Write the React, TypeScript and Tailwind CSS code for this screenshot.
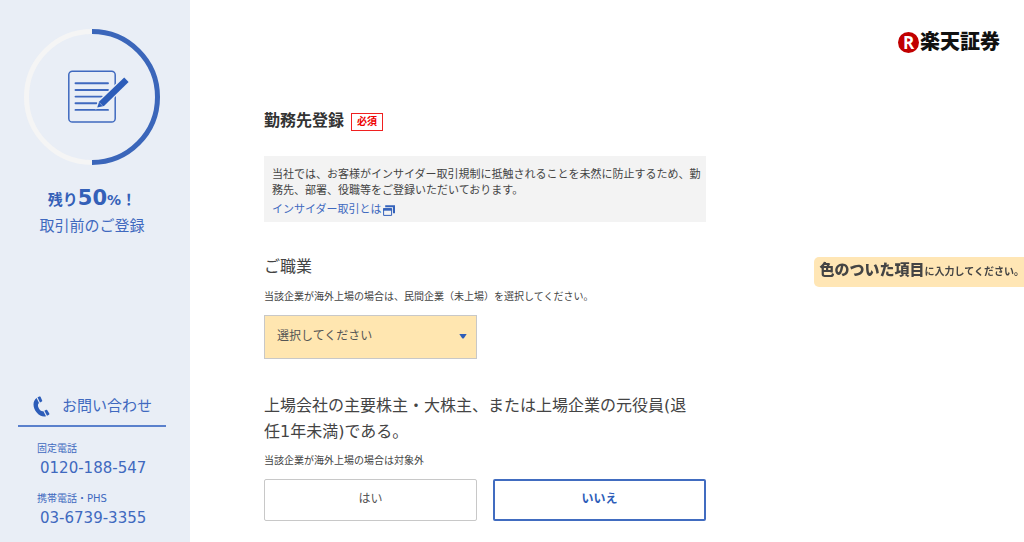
import { useState } from "react";

function ProgressRing() {
  return (
    <svg viewBox="0 0 136 136" className="h-[136px] w-[136px]" role="img" aria-label="50%" fill="none">
      <path d="M68 2.5A65.5 65.5 0 0 0 68 133.5" stroke="#f5f5f5" strokeWidth="5" />
      <path d="M68 2.5A65.5 65.5 0 0 1 68 133.5" stroke="#3b66ba" strokeWidth="5" />
      <rect x="44.8" y="42.2" width="46.4" height="50.8" rx="3.6" stroke="#3f69bf" strokeWidth="1.5" />
      <path
        d="M51.5 54.3H84M51.5 61H84M51.5 67.6H78M51.5 74.3H72.500M51.5 80.9H84"
        stroke="#3f69bf"
        strokeWidth="1.9"
        strokeLinecap="round"
      />
      <path
        d="M100.200 48.600L104.600 52.900L80 76.900L73.200 78.600L75.200 72.500Z"
        stroke="#e9eef6"
        strokeWidth="2.600"
      />
      <path d="M100.200 48.600L104.600 52.900L80 76.900L73.200 78.600L75.200 72.500Z" fill="#2d5db9" />
      <path d="M75.500 73.800L78.700 76.900" stroke="#9db4de" strokeWidth="0.800" />
    </svg>
  );
}

function PhoneIcon() {
  return (
    <svg viewBox="0 0 17 21" className="h-[21px] w-[17px]" aria-hidden="true" fill="#2d5db9">
      <path d="M3.600 2C-0.800 5.500-0.200 11.500 3.500 16.200C6.300 19.700 10 21.200 13 20.300L10.400 15.200C8.500 15.700 6.900 14.200 5.800 12.200C4.700 10.200 4.500 8.300 6 7.100Z" />
      <path d="M4.500 1.300L6.500 0.400Q7.100 0.200 7.500 0.800L9.200 4.500Q9.400 5.200 8.900 5.500L7 6.500Z" />
      <path d="M11.400 14.700L13.100 13.800Q13.700 13.600 14.100 14.100L16.300 17.600Q16.500 18.300 16 18.700L14 19.800Z" />
    </svg>
  );
}

function WindowIcon() {
  return (
    <svg viewBox="0 0 12 11" className="ml-px h-[11px] w-3" aria-hidden="true" fill="none" stroke="#3563bb">
      <path d="M2.200 1.200H11V8.300" strokeWidth="2" />
      <path d="M0.600 3.600H8.600V10.400H0.600Z" strokeWidth="1" />
      <path d="M0.100 4.500H9.100" strokeWidth="2.400" />
    </svg>
  );
}

function PhoneNumber({ label, number }: { label: string; number: string }) {
  return (
    <div className="pl-[19px]">
      <dt className="text-[10px] leading-4">{label}</dt>
      <dd className="pl-[3px] text-[15px] leading-[22px]">{number}</dd>
    </div>
  );
}

function Sidebar() {
  return (
    <aside className="flex w-[190px] shrink-0 flex-col justify-between bg-[#e9eef6] text-[#3f69bf]">
      <div className="flex flex-col items-center pr-1.5 pt-[29px]">
        <ProgressRing />
        <p className="mt-5 text-[15px] font-bold leading-[26px] text-[#3460b8]">
          残り<span className="text-[21px] leading-[26px]">50</span>
          <span className="text-sm leading-[26px]">%</span>！
        </p>
        <p className="text-[15px] leading-[26px]">取引前のご登録</p>
      </div>
      <section className="pb-[13px] pl-[18px] pr-6">
        <h2 className="flex items-center gap-3 border-b-2 border-[#5a80cc] pb-[7px] pl-[15px] text-[15px] leading-[24px]">
          <PhoneIcon />
          お問い合わせ
        </h2>
        <dl className="mt-[14px] flex flex-col gap-3">
          <PhoneNumber label="固定電話" number="0120-188-547" />
          <PhoneNumber label="携帯電話・PHS" number="03-6739-3355" />
        </dl>
      </section>
    </aside>
  );
}

function Logo() {
  return (
    <div className="flex items-center text-[20px] font-black leading-6 text-[#111]">
      <span className="mr-px flex h-[21px] w-[21px] items-center justify-center rounded-full bg-[#c10000] font-['Open_Sans',sans-serif] text-[17px] font-bold leading-none text-white">
        R
      </span>
      楽天証券
    </div>
  );
}

export default function App() {
  const [occupation, setOccupation] = useState("");
  const [isOfficer, setIsOfficer] = useState(false);
  const plain = "border border-[#c8c8c8] text-[#555]";
  const active = "border-2 border-[#416cc0] font-bold text-[#2d5db9]";

  return (
    <div
      lang="ja"
      className="flex min-h-screen bg-white font-['DejaVu_Sans','Noto_Sans_CJK_JP',sans-serif] text-[#444]"
    >
      <Sidebar />
      <div className="min-w-0 grow">
        <header className="flex justify-end pr-6 pt-[30px]">
          <Logo />
        </header>
        <main className="ml-[74px] mt-[55px] max-w-[442px]">
          <div className="flex items-center gap-[7px]">
            <h1 className="text-[16px] font-bold leading-6 text-[#333]">勤務先登録</h1>
            <span className="mt-0.5 border border-[#f02020] px-[5px] text-[10px] font-bold leading-4 text-[#ee0000]">
              必須
            </span>
          </div>

          <div className="mt-[23px] bg-[#f3f3f3] pb-0.5 pl-2 pr-1 pt-[11px] text-[11px] leading-4">
            <p>
              当社では、お客様がインサイダー取引規制に抵触されることを未然に防止するため、勤務先、部署、役職等をご登録いただいております。
            </p>
            <a href="#insider" className="mt-px flex items-center leading-5 text-[#3f69bf]">
              インサイダー取引とは
              <WindowIcon />
            </a>
          </div>

          <section className="mt-[33px]">
            <label htmlFor="occupation" className="block text-[16px] leading-6">
              ご職業
            </label>
            <p className="mt-2.5 text-[10px] leading-4">
              当該企業が海外上場の場合は、民間企業（未上場）を選択してください。
            </p>
            <div className="mt-2.5 grid grid-cols-2 gap-4">
              <div className="relative">
                <select
                  id="occupation"
                  value={occupation}
                  onChange={(e) => setOccupation(e.target.value)}
                  className="h-11 w-full appearance-none border border-[#c8c8c8] bg-[#ffe6b0] pb-0.5 pl-3 pr-8 text-xs text-[#555]"
                >
                  <option value="">選択してください</option>
                  <option value="listed">上場企業</option>
                  <option value="private">民間企業（未上場）</option>
                </select>
                <svg
                  viewBox="0 0 8 5"
                  className="pointer-events-none absolute right-2.5 top-[19px] h-[5px] w-2"
                  aria-hidden="true"
                >
                  <path d="M0.300 0H7.700L5 4Q4 5 3 4Z" fill="#2d5db9" />
                </svg>
              </div>
            </div>
          </section>

          <section className="mt-[34px]">
            <h2 className="max-w-[436px] text-[16px] leading-[26px]">
              上場会社の主要株主・大株主、または上場企業の元役員(退任1年未満)である。
            </h2>
            <p className="mt-2 text-[10px] leading-4">当該企業が海外上場の場合は対象外</p>
            <div className="mt-2.5 grid grid-cols-2 gap-4 text-xs">
              <button
                type="button"
                aria-pressed={isOfficer}
                onClick={() => setIsOfficer(true)}
                className={`h-[42px] rounded-[2px] pb-0.5 ${isOfficer ? active : plain}`}
              >
                はい
              </button>
              <button
                type="button"
                aria-pressed={!isOfficer}
                onClick={() => setIsOfficer(false)}
                className={`h-[42px] rounded-[2px] pb-0.5 ${isOfficer ? plain : active}`}
              >
                いいえ
              </button>
            </div>
          </section>
        </main>
      </div>

      <p className="fixed right-0 top-[257px] flex items-baseline rounded-l-[5px] bg-[#ffe6b5] pb-1 pl-1.5 text-[10px] font-bold leading-[22px]">
        <strong className="text-[15px] leading-[26px]">色のついた項目</strong>
        に入力してください。
      </p>
    </div>
  );
}
